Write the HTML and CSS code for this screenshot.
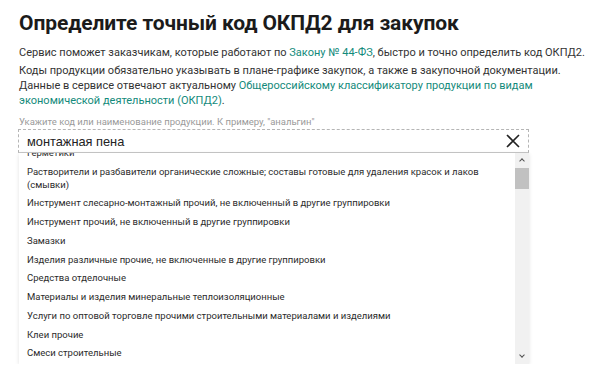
FILE: index.html
```html
<!DOCTYPE html>
<html lang="ru">
<head>
  <meta charset="UTF-8">
  <meta name="viewport" content="width=device-width, initial-scale=1.0">
  <title>Определите точный код ОКПД2 для закупок</title>
  <link rel="stylesheet" href="styles.css">
</head>
<body>

<div class="container">
  <h1>Определите точный код ОКПД2 для закупок</h1>

  <!-- описание сервиса -->
  <p class="intro first">Сервис поможет заказчикам, которые работают по <a href="#">Закону № 44-ФЗ</a>, быстро и точно определить код ОКПД2.</p>
  <p class="intro">Коды продукции обязательно указывать в плане-графике закупок, а также в закупочной документации.<br>
    Данные в сервисе отвечают актуальному <a href="#">Общероссийскому классификатору продукции по видам<br>
    экономической деятельности (ОКПД2)</a>.</p>

  <!-- поиск -->
  <div class="search">
    <label class="search-label" for="searchInput">Укажите код или наименование продукции. К примеру, "анальгин"</label>
    <div class="search-field">
      <input type="text" id="searchInput" value="монтажная пена">
      <button class="clear" type="button" aria-label="Очистить">
        <svg width="14" height="14" viewBox="0 0 14 14"><path d="M1 1L13 13M13 1L1 13" stroke="#222" stroke-width="1.6" fill="none"/></svg>
      </button>
    </div>

    <!-- выпадающий список -->
    <div class="dropdown">
      <ul class="results">
        <li>Герметики</li>
        <li>Растворители и разбавители органические сложные; составы готовые для удаления красок и лаков<br>(смывки)</li>
        <li>Инструмент слесарно-монтажный прочий, не включенный в другие группировки</li>
        <li>Инструмент прочий, не включенный в другие группировки</li>
        <li>Замазки</li>
        <li>Изделия различные прочие, не включенные в другие группировки</li>
        <li>Средства отделочные</li>
        <li>Материалы и изделия минеральные теплоизоляционные</li>
        <li>Услуги по оптовой торговле прочими строительными материалами и изделиями</li>
        <li>Клеи прочие</li>
        <li>Смеси строительные</li>
      </ul>
      <div class="scrollbar">
        <span class="arrow up"></span>
        <span class="thumb"></span>
        <span class="track"></span>
        <span class="arrow down"></span>
      </div>
    </div>
  </div>
</div>

</body>
</html>
```

FILE: styles.css
```css
body {
  font-family: Roboto, "Open Sans", Arial, sans-serif;
  background-color: #fff;
  margin: 0;
  padding: 0;
  color: #333;
}
.container {
  padding: 11px 12px 0 19px;
}
h1 {
  margin: 0 0 10px;
  font-size: 21px;
  font-weight: 700;
  color: #1b1b1b;
  line-height: 24px;
  letter-spacing: -0.1px;
}
.intro {
  margin: 0;
  font-size: 11px;
  line-height: 15px;
  white-space: nowrap;
}
.intro.first {
  margin-bottom: 3px;
}
.intro a {
  color: #138a7b;
  text-decoration: none;
}
.search {
  margin-top: 8px;
  margin-left: -1px;
  width: 511px;
}
.search-label {
  display: block;
  font-size: 9.5px;
  color: #9a9a9a;
  line-height: 12px;
  margin: 0 0 1px 1px;
}
.search-field {
  display: flex;
  align-items: center;
  height: 24px;
  border: 1px dashed #b5b5b5;
  border-bottom: 1px solid #c8c8c8;
  box-sizing: border-box;
  background: #fff;
}
.search-field input {
  flex: 1;
  border: none;
  outline: none;
  height: 100%;
  padding: 0 0 0 8px;
  font-family: "Liberation Sans", Arial, sans-serif;
  font-size: 12.8px;
  color: #222;
  background: transparent;
}
.clear {
  border: none;
  background: none;
  padding: 0;
  width: 30px;
  height: 22px;
  display: flex;
  align-items: center;
  justify-content: center;
}
.dropdown {
  display: flex;
  height: 211px;
  margin-left: 1px;
  background: #fff;
  box-shadow: 0 1px 4px rgba(0, 0, 0, 0.12);
  overflow: hidden;
}
.results {
  flex: 1;
  list-style: none;
  margin: 0;
  padding: 0;
  overflow: hidden;
}
.results li {
  padding: 3px 8px;
  font-size: 9.5px;
  line-height: 12.75px;
  color: #2b2b2b;
  white-space: nowrap;
}
.results li:first-child {
  margin-top: -9px;
}
.scrollbar {
  width: 14px;
  display: flex;
  flex-direction: column;
  background: #f1f1f1;
}
.arrow {
  height: 14px;
  position: relative;
}
.arrow::before {
  content: "";
  position: absolute;
  left: 5px;
  width: 3px;
  height: 3px;
  border-left: 1.5px solid #505050;
  border-top: 1.5px solid #505050;
}
.arrow.up::before {
  top: 6px;
  transform: rotate(45deg);
}
.arrow.down::before {
  top: 3px;
  transform: rotate(225deg);
}
.thumb {
  height: 21px;
  margin-top: 1px;
  background: #c1c1c1;
}
.track {
  flex: 1;
}
```
